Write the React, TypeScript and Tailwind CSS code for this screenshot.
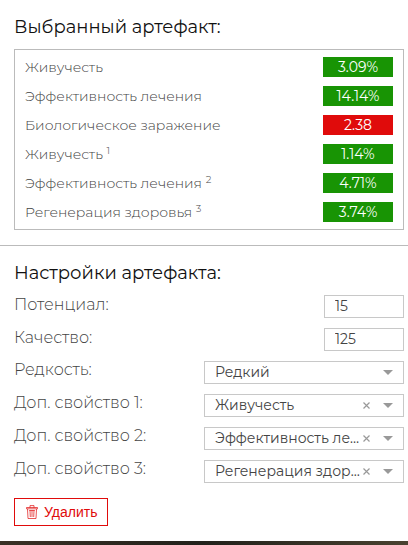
import { useState } from "react";

type Stat = { name: string; value: string; note?: number; bad?: boolean };

const stats: Stat[] = [
  { name: "Живучесть", value: "3.09%" },
  { name: "Эффективность лечения", value: "14.14%" },
  { name: "Биологическое заражение", value: "2.38", bad: true },
  { name: "Живучесть", value: "1.14%", note: 1 },
  { name: "Эффективность лечения", value: "4.71%", note: 2 },
  { name: "Регенерация здоровья", value: "3.74%", note: 3 },
];

const rarities = ["Обычный", "Необычный", "Особый", "Редкий", "Исключительный", "Легендарный"];
const properties = ["Живучесть", "Эффективность лечения", "Регенерация здоровья"];

const NumberRow = ({ id, label, initial }: { id: string; label: string; initial: string }) => {
  const [value, setValue] = useState(initial);
  return (
    <div className="flex h-[23px] items-start justify-between">
      <label htmlFor={id} className="text-base leading-5 font-light text-[#444]">{label}</label>
      <input id={id} inputMode="numeric" value={value} onChange={(e) => setValue(e.target.value)} className="h-[23px] w-20 border border-[#c8c8c8] px-2.5 pb-0.5 text-sm leading-5 text-[#444] outline-none" />
    </div>
  );
};

const SelectRow = ({ id, label, initial, options, clearable }: { id: string; label: string; initial: string; options: string[]; clearable?: boolean }) => {
  const [value, setValue] = useState(initial);
  return (
    <div className="flex h-[23px] items-start justify-between">
      <label htmlFor={id} className="text-base leading-[18px] font-light text-[#444]">{label}</label>
      <div className="relative w-[200px]">
        <select id={id} value={value} onChange={(e) => setValue(e.target.value)} className="block h-[23px] w-full cursor-pointer appearance-none truncate border border-[#c8c8c8] bg-white pr-[42px] pb-0.5 pl-2.5 text-sm leading-5 text-[#444] outline-none">
          {clearable && <option value=""></option>}
          {options.map((option) => (
            <option key={option}>{option}</option>
          ))}
        </select>
        {clearable && (
          <button type="button" aria-label="Очистить" onClick={() => setValue("")} className="absolute top-2 right-[34px] cursor-pointer text-[#999]">
            <svg viewBox="0 0 7 7" className="h-[7px] w-[7px]" fill="none" stroke="currentColor" strokeWidth="1.2">
              <path d="M.5 .5l6 6M6.5 .5l-6 6" />
            </svg>
          </button>
        )}
        <svg viewBox="0 0 10 5" className="pointer-events-none absolute top-[9px] right-[11px] h-[5px] w-2.5 fill-[#999]">
          <path d="M0 0h10L5 5z" />
        </svg>
      </div>
    </div>
  );
};

const TrashIcon = () => (
  <svg viewBox="0 0 12 14" className="h-3.5 w-3" fill="none" stroke="currentColor" strokeWidth="0.7">
    <path d="M.5 2.5h11M4 2.5V.6h4v1.9M.5 2.5v1.3h11V2.5M1.5 4l.5 9.5h8l.5-9.5M3.2 5.5h5.6M4 5.5l.3 6.5M6 5.5V12M8 5.5L7.7 12" />
  </svg>
);

const App = () => {
  return (
    <div className="font-[Montserrat,Inter,sans-serif]">
      <main className="bg-white pb-[15px]">
        <section className="border-b border-[#bbb] pt-[15px] pr-1 pb-[15px] pl-3.5">
          <h2 className="text-lg leading-6 text-[#111]">Выбранный артефакт:</h2>
          <div className="mt-2.5 border border-[#bbb] pt-[3px] pr-2.5 pb-0.5 pl-2.5">
            <table className="w-full">
              <tbody>
                {stats.map((stat, i) => (
                  <tr key={i}>
                    <th scope="row" className="pt-1 pb-[5px] text-left text-sm leading-5 font-light text-[#444]">
                      {stat.name}
                      {stat.note && <> <sup className="text-[10px]">{stat.note}</sup></>}
                    </th>
                    <td className="w-[70px] pt-1 pb-[5px]">
                      <div className={`text-center text-sm leading-5 text-white ${stat.bad ? "bg-[#e00b0b]" : "bg-[#189404]"}`}>{stat.value}</div>
                    </td>
                  </tr>
                ))}
              </tbody>
            </table>
          </div>
        </section>
        <section className="pt-[15px] pr-1 pl-3.5">
          <h2 className="text-lg leading-6 text-[#111]">Настройки артефакта:</h2>
          <form className="mt-2.5 flex flex-col gap-2.5" onSubmit={(e) => e.preventDefault()}>
            <NumberRow id="potential" label="Потенциал:" initial="15" />
            <NumberRow id="quality" label="Качество:" initial="125" />
            <SelectRow id="rarity" label="Редкость:" initial="Редкий" options={rarities} />
            {properties.map((property, i) => (
              <SelectRow key={property} id={`property-${i + 1}`} label={`Доп. свойство ${i + 1}:`} initial={property} options={properties} clearable />
            ))}
            <button type="button" className="mt-[5px] flex h-7 cursor-pointer items-center gap-1.5 self-start border border-[#e00b0b] pr-2.5 pl-[11px] font-['Liberation_Sans',sans-serif] text-sm leading-5 text-[#e00b0b]">
              <TrashIcon />
              Удалить
            </button>
          </form>
        </section>
      </main>
      <div className="h-1 bg-linear-to-r from-[#3a3126] via-[#22211b] to-[#4a4230]" />
    </div>
  );
};

export default App;
